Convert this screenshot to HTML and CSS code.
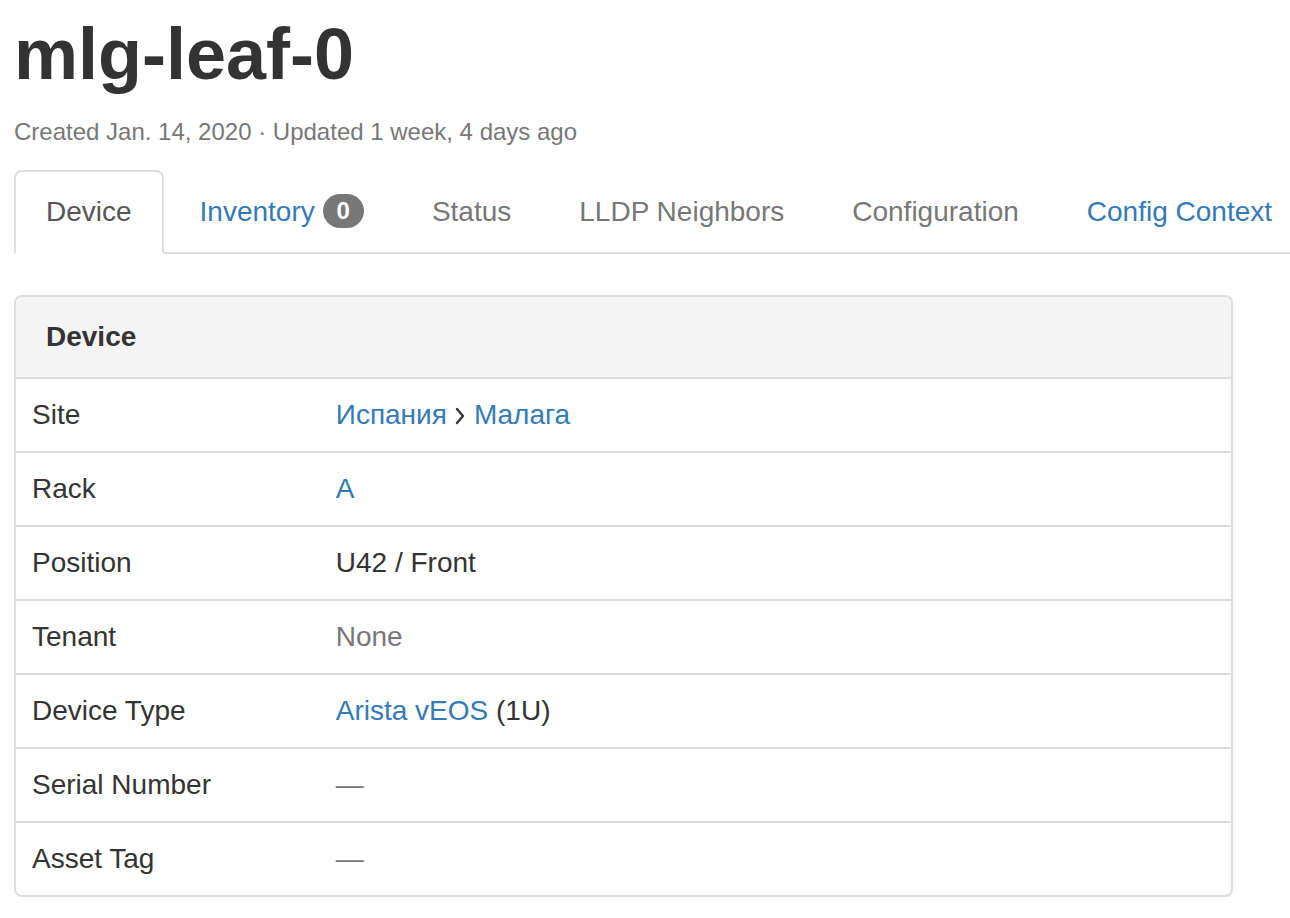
FILE: index.html
```html
<!DOCTYPE html>
<html lang="en">
<head>
<meta charset="utf-8">
<title>mlg-leaf-0</title>
<link rel="stylesheet" href="styles.css">
</head>
<body>
<div class="page">
  <h1 class="title">mlg-leaf-0</h1>
  <p class="meta">Created Jan. 14, 2020 · Updated 1 week, 4 days ago</p>

  <ul class="tabs">
    <li class="tab active"><a href="#">Device</a></li>
    <li class="tab"><a href="#" class="link">Inventory <span class="badge">0</span></a></li>
    <li class="tab"><a href="#" class="muted">Status</a></li>
    <li class="tab"><a href="#" class="muted">LLDP Neighbors</a></li>
    <li class="tab"><a href="#" class="muted">Configuration</a></li>
    <li class="tab"><a href="#" class="link">Config Context</a></li>
  </ul>

  <div class="panel">
    <div class="panel-heading"><strong>Device</strong></div>
    <table class="attrs">
      <tr>
        <td class="key">Site</td>
        <td><a href="#" class="link">Испания</a><svg class="chev" width="10" height="18" viewBox="0 0 10 18"><path d="M2 2 L8 9 L2 16" fill="none" stroke="#333" stroke-width="2.4" stroke-linecap="round" stroke-linejoin="round"/></svg><a href="#" class="link">Малага</a></td>
      </tr>
      <tr>
        <td class="key">Rack</td>
        <td><a href="#" class="link">A</a></td>
      </tr>
      <tr>
        <td class="key">Position</td>
        <td>U42 / Front</td>
      </tr>
      <tr>
        <td class="key">Tenant</td>
        <td><span class="muted">None</span></td>
      </tr>
      <tr>
        <td class="key">Device Type</td>
        <td><a href="#" class="link">Arista vEOS</a> (1U)</td>
      </tr>
      <tr>
        <td class="key">Serial Number</td>
        <td><span class="muted">—</span></td>
      </tr>
      <tr>
        <td class="key">Asset Tag</td>
        <td><span class="muted">—</span></td>
      </tr>
    </table>
  </div>
</div>
</body>
</html>
```

FILE: styles.css
```css
html, body {
  margin: 0;
  padding: 0;
  background: #fff;
  overflow-x: hidden;
}

body {
  font-family: "Liberation Sans", Arial, sans-serif;
  font-size: 28px;
  line-height: 40px;
  color: #333;
}

.page {
  padding: 12px 0 0 14px;
}

.title {
  margin: 0;
  font-size: 72px;
  line-height: 84px;
  font-weight: bold;
  color: #333;
}

.meta {
  margin: 19px 0 0 0;
  font-size: 24px;
  line-height: 34px;
  color: #777;
}

.tabs {
  list-style: none;
  margin: 21px 0 0 0;
  padding: 0;
  display: flex;
  flex-wrap: nowrap;
  border-bottom: 2px solid #ddd;
}

.tab {
  flex: none;
  margin: 0 4px -2px 0;
}

.tab a {
  display: block;
  padding: 20px 30px;
  line-height: 40px;
  border: 2px solid transparent;
  border-radius: 8px 8px 0 0;
  text-decoration: none;
  white-space: nowrap;
}

.tab.active a {
  color: #555;
  background: #fff;
  border-color: #ddd #ddd transparent #ddd;
}

.link {
  color: #337ab7;
  text-decoration: none;
}

.muted {
  color: #777;
}

.badge {
  display: inline-block;
  padding: 5px 14px;
  font-size: 24px;
  font-weight: bold;
  line-height: 24px;
  color: #fff;
  background: #777;
  border-radius: 20px;
  text-align: center;
  vertical-align: 2px;
}

.panel {
  margin-top: 41px;
  width: 1219px;
  box-sizing: border-box;
  border: 2px solid #ddd;
  border-radius: 8px;
  overflow: hidden;
  box-shadow: 0 1px 2px rgba(0, 0, 0, 0.05);
}

.panel-heading {
  background: #f4f4f4;
  padding: 20px 30px;
  line-height: 40px;
  border-bottom: 2px solid #ddd;
  color: #333;
}

.attrs {
  width: 100%;
  border-collapse: collapse;
}

.attrs td {
  padding: 16px;
  line-height: 40px;
  vertical-align: top;
  border-top: 2px solid #ddd;
}

.attrs tr:first-child td {
  border-top: none;
}

.attrs .key {
  width: 25%;
}

.chev {
  display: inline-block;
  vertical-align: -1px;
  margin: 0 9px 0 8px;
}
```
